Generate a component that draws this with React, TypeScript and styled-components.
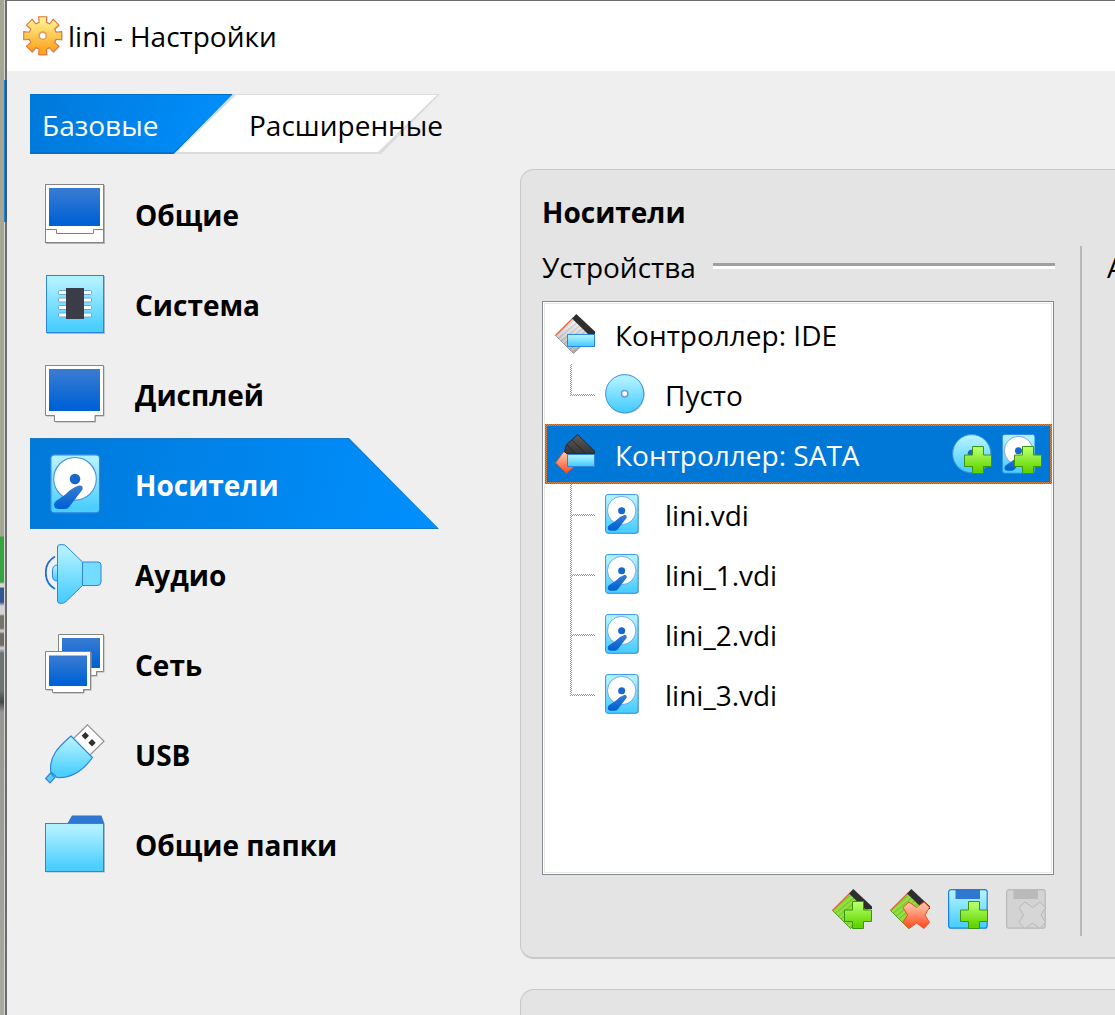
import React, { useState } from "react";
import styled, { createGlobalStyle, css } from "styled-components";

const GlobalStyle = createGlobalStyle`
  *, *::before, *::after { box-sizing: border-box; }
  body {
    margin: 0;
    overflow: hidden;
    background: #efefef;
    color: #000;
    font-family: "Open Sans", "Noto Sans", sans-serif;
    font-size: 28px;
  }
  button { font: inherit; color: inherit; background: none; border: 0; padding: 0; }
  h1, h2, h3, ul { margin: 0; padding: 0; font-weight: 400; font-size: inherit; }
  ul { list-style: none; }
  svg { display: block; flex: none; }
`;

const checker = (a: string, b: string) =>
  `conic-gradient(${a} 25%, ${b} 0 50%, ${a} 0 75%, ${b} 0) 0 0 / 2px 2px`;

/* ---------- window ---------- */

const Screen = styled.div`
  display: flex;
  height: 100vh;
  overflow: hidden;
`;

const Desktop = styled.div`
  flex: none;
  width: 7px;
  background:
    linear-gradient(90deg, transparent 4px, #d4d4d4 4px 5px, #6c6c6c 5px),
    linear-gradient(#a5a694 0 536px, #35a53d 537px 582px, #d8d8d8 584px 587px, #31588f 588px 602px,
      #d5d5d5 606px 614px, #77736a 616px 628px, #d8d8d8 631px, #6f6c66 634px 645px, #d8d8d8 648px,
      #6d7474 653px 690px, #454848 702px, #959792 712px, #aaa99f);
`;

const Blue = styled.div`
  width: 3px;
  height: 142px;
  margin: 80px 0 0 4px;
  background: linear-gradient(90deg, #1c84d8 1px, #3c5a78 1px);
`;

const Window = styled.main`
  display: flex;
  flex: 1;
  flex-direction: column;
  min-width: 0;
  border-top: 1px solid #6c6c6c;
`;

const TitleBar = styled.header`
  display: flex;
  flex: none;
  align-items: center;
  gap: 5px;
  height: 70px;
  padding-left: 16px;
  background: #fff;
`;

const Body = styled.div`
  display: grid;
  flex: 1;
  grid-template-columns: 409px minmax(0, 1fr);
  grid-template-rows: 60px minmax(0, 1fr);
  gap: 15px 81px;
  min-height: 0;
  padding: 23px 0 0 23px;
`;

/* ---------- tabs ---------- */

const Tabs = styled.div`
  display: flex;
  grid-column: 1 / -1;
`;

const slant = "polygon(0 0, 100% 0, calc(100% - 59px) 100%, 0 100%)";
const slantBoth = "polygon(59px 0, 100% 0, calc(100% - 59px) 100%, 0 100%)";

const Tab = styled.button<{ $first?: boolean }>`
  position: relative;
  z-index: 0;
  flex: none;
  width: ${(p) => (p.$first ? 203 : 266)}px;
  margin-left: ${(p) => (p.$first ? 0 : -59)}px;
  padding-left: ${(p) => (p.$first ? 12 : 75)}px;
  padding-top: 2px;
  text-align: left;
  white-space: nowrap;
  color: ${(p) => (p.$first ? "#fff" : "#000")};

  &::before, &::after {
    content: "";
    position: absolute;
    z-index: -1;
    inset: 0;
    clip-path: ${(p) => (p.$first ? slant : slantBoth)};
    background: ${(p) => (p.$first ? "#0070c8" : "#dcdcdc")};
  }
  &::after {
    inset: ${(p) => (p.$first ? "1px 0 2px" : "1px 3px 2px")};
    background: ${(p) => (p.$first ? "linear-gradient(105deg, #0079d9, #0090ff)" : "#fff")};
  }
`;

/* ---------- navigation ---------- */

const NavItem = styled.button<{ $active: boolean }>`
  position: relative;
  z-index: 0;
  display: flex;
  align-items: center;
  gap: 30px;
  width: 100%;
  height: 90px;
  padding-left: 15px;
  font-weight: 700;
  text-align: left;

  ${(p) =>
    p.$active &&
    css`
      color: #fff;
      &::before, &::after {
        content: "";
        position: absolute;
        z-index: -1;
        inset: -1px 0 0;
        clip-path: polygon(0 0, calc(100% - 90px) 0, 100% 100%, 0 100%);
        background: #1579c8;
      }
      &::after {
        inset: 0 1px 1px 0;
        background: linear-gradient(105deg, #0079d9, #0090ff);
      }
    `}
`;

const Label = styled.span`
  padding-top: 2px;
`;

/* ---------- panels ---------- */

const Pages = styled.div`
  display: flex;
  flex-direction: column;
  gap: 30px;
  min-height: 0;
`;

const Panel = styled.section`
  flex: none;
  padding: 23px 0 21px 21px;
  border: 1px solid #c8c8c8;
  border-width: 1px 0 2px 1px;
  border-radius: 14px 0 0 14px;
  background: #e4e4e4;
`;

const NextPanel = styled(Panel)`
  flex: 1 0 26px;
  padding: 0;
  border-bottom: 0;
  border-radius: 14px 0 0 0;
`;

const PanelTitle = styled.h2`
  height: 40px;
  margin-bottom: 13px;
  font-weight: 700;
  line-height: 38px;
`;

const Columns = styled.div`
  display: grid;
  grid-template-columns: minmax(0, 1fr) 2px 33px;
`;

const Devices = styled.div`
  display: flex;
  flex-direction: column;
  padding: 0 26px 7px 0;
`;

const Divider = styled.div`
  background: #b8b8b8;
`;

const Legend = styled.h3`
  display: flex;
  align-items: center;
  gap: 17px;
  height: 42px;
  margin: 0 -1px 13px 0;
  white-space: nowrap;

  &::after {
    content: "";
    flex: 1;
    height: 6px;
    margin-bottom: 2px;
    background: linear-gradient(#a0a0a0 50%, #fff 50%);
  }
`;

const Attributes = styled.h3`
  overflow: hidden;
  height: 42px;
  padding-left: 25px;
  line-height: 42px;
`;

/* ---------- storage tree ---------- */

const Tree = styled.ul`
  min-height: 574px;
  padding: 2px 1px 2px 2px;
  border: 1px solid #828790;
  background: #fff;
  box-shadow: inset 0 0 0 1px #fff, inset 0 0 0 2px #e6e8e3;
`;

const Row = styled.li<{ $selected?: boolean }>`
  display: flex;
  align-items: center;
  gap: 20px;
  height: 60px;
  padding: 0 8px;
  border: 2px solid transparent;
  cursor: default;

  ${(p) =>
    p.$selected &&
    css`
      color: #fff;
      background:
        linear-gradient(#0078d7, #0078d7) padding-box,
        ${checker("#d98b4e", "#2a7cc4")} border-box;
    `}
`;

const ChildRow = styled(Row)`
  gap: 10px;
  padding-left: 25px;
  border-width: 0;
`;

const Branch = styled.span<{ $last: boolean }>`
  display: grid;
  flex: none;
  grid-template: 30px 2px 28px / 2px 1fr;
  width: 25px;

  &::before, &::after {
    content: "";
    grid-area: 1 / 1 / ${(p) => (p.$last ? 3 : 4)} / 2;
    background: ${checker("#969696", "#fff")};
  }
  &::after { grid-area: 2 / 2; }
`;

const ChildName = styled(Label)`
  padding-left: 10px;
`;

const RowActions = styled.span`
  display: flex;
  gap: 10px;
  margin-left: auto;
`;

const ToolBar = styled.div`
  display: flex;
  justify-content: flex-end;
  gap: 18px;
  margin-top: 14px;
  padding-right: 8px;
`;

const IconButton = styled.button`
  display: block;
  width: 40px;
  height: 40px;
`;

/* ---------- icons ---------- */

const Gradients = styled.svg`
  position: absolute;
  width: 0;
  height: 0;
`;

const gradients: Array<[string, string, string]> = [
  ["aqua", "#b0f1ff", "#4ccfff"],
  ["royal", "#3579d2", "#0062d5"],
  ["green", "#b2ff66", "#62d400"],
  ["red", "#ffc3a5", "#ff5329"],
  ["gold", "#fff08e", "#ffa41c"],
  ["dark", "#585858", "#383838"],
  ["gray", "#f4f4f4", "#bcbcbc"],
];

function GradientDefs() {
  return (
    <Gradients aria-hidden="true">
      <defs>
        {gradients.map(([id, from, to]) => (
          <linearGradient key={id} id={id} x1="0" y1="0" x2="0" y2="1">
            <stop offset="0.1" stopColor={from} />
            <stop offset="0.9" stopColor={to} />
          </linearGradient>
        ))}
        <pattern id="pins" width="4" height="4" patternUnits="userSpaceOnUse" patternTransform="rotate(-40)">
          <rect width="4" height="1.5" fill="#000" opacity="0.13" />
        </pattern>
      </defs>
    </Gradients>
  );
}

type ArtProps = { size?: number; box?: string; children: React.ReactNode };

function Art({ size = 40, box, children }: ArtProps) {
  return (
    <svg width={size} height={size} viewBox={box ?? `0 0 ${size} ${size}`} aria-hidden="true">
      {children}
    </svg>
  );
}

function GearIcon() {
  const points: string[] = [];
  const tooth: Array<[number, number]> = [
    [13.8, -15], [15.5, -14], [19.4, -12], [19.4, 12], [15.5, 14], [13.8, 15],
  ];
  for (let i = 0; i < 8; i++) {
    for (const [r, a] of tooth) {
      const t = ((i * 45 + a) * Math.PI) / 180;
      points.push(`${(19.7 + r * Math.cos(t)).toFixed(2)},${(19.7 + r * Math.sin(t)).toFixed(2)}`);
    }
  }
  return (
    <Art>
      <polygon points={points.join(" ")} fill="#888" opacity="0.4" transform="translate(.8 .8)" />
      <polygon points={points.join(" ")} fill="url(#gold)" stroke="#e0733a" strokeWidth="1.1" />
      <circle cx="19.7" cy="19.7" r="3.6" fill="#fff" stroke="#dd9c62" strokeWidth="1.6" />
    </Art>
  );
}

function GeneralIcon() {
  return (
    <Art size={60}>
      <rect x="1.5" y="1.5" width="58" height="58" fill="none" stroke="#b4b4b4" />
      <rect x=".5" y=".5" width="58" height="58" fill="#fff" stroke="#858585" />
      <rect x="4" y="4" width="51" height="38" fill="url(#royal)" />
      <path d="M0 45.5H11.5V49.5H48.5V45.5H59" fill="none" stroke="#808080" />
    </Art>
  );
}

function SystemIcon() {
  return (
    <Art size={60}>
      <rect x="2" y="2" width="58" height="58" fill="#a9b7c6" />
      <rect x="1.5" y="1.5" width="57" height="57" fill="url(#aqua)" stroke="#2f84dc" />
      {[16.5, 24, 31.5, 39].map((y) => (
        <rect key={y} x="13.5" y={y} width="33" height="4" rx="1" fill="#fff" stroke="#6ba5d8" />
      ))}
      <rect x="21" y="14" width="18" height="31" fill="#3a3d47" />
    </Art>
  );
}

function DisplayIcon() {
  const frame = "M.5 1.5H58.5V51.5H50V57.5H9.5V51.5H.5Z";
  return (
    <Art size={60}>
      <path d={frame} transform="translate(1 1)" fill="#b4b4b4" />
      <path d={frame} fill="#fff" stroke="#858585" />
      <rect x="4" y="5" width="51" height="42" fill="url(#royal)" />
    </Art>
  );
}

function DriveShape() {
  return (
    <>
      <rect x="6.6" y="1.6" width="49" height="58" rx="3.5" fill="#3c6690" opacity="0.5" />
      <rect x="5.8" y=".8" width="48.8" height="58" rx="3.5" fill="url(#aqua)" stroke="#2a86e0" strokeWidth="1.3" />
      <circle cx="30" cy="24.8" r="21.3" fill="#fff" stroke="#4a90d8" strokeWidth="1.1" />
      <circle cx="30" cy="25" r="5.3" fill="#1768ce" />
      <path d="M34 31.5Q26 34 21 40L11 47Q9 48.5 9 51L10 54 13 55H20Q23 55 24.5 52.5L37.5 35.5Q38.5 31 34 31.5Z" fill="url(#royal)" />
    </>
  );
}

function StorageIcon() {
  return <Art size={60}><DriveShape /></Art>;
}

function DriveIcon() {
  return <Art box="5 0 60 60"><DriveShape /></Art>;
}

function AudioIcon() {
  return (
    <Art size={60}>
      <path d="M12.5 21Q7.5 21 7.5 27V32Q7.5 37 12.5 37Z" fill="url(#aqua)" stroke="#2f84dc" />
      <path d="M10 12.5C-2.3 19.5-2.3 38 10 45" fill="none" stroke="#1c70d0" strokeWidth="1.8" />
      <path d="M37.5 18H53Q56 18 56 21V38Q56 41.5 52 41.5H37.5Z" fill="#74dcff" stroke="#2f84dc" />
      <path d="M12.5 3Q12.5 .7 15 .7H18Q20 .7 21 2L37.5 18V41.5L21 57.5Q19 59.3 17 59.3H15Q12.5 59.3 12.5 57Z" fill="url(#aqua)" stroke="#2f84dc" />
    </Art>
  );
}

function NetworkIcon() {
  const back = "M13.5 .5H58.5V37.5H51.5V41.5H20V37.5H13.5Z";
  const front = "M.5 17.5H45.5V55.5H38.5V58.5H7.5V55.5H.5Z";
  return (
    <Art size={60}>
      <path d={back} transform="translate(1 1)" fill="#b0b0b0" />
      <path d={back} fill="#fff" stroke="#858585" />
      <rect x="17" y="4" width="38" height="30" fill="url(#royal)" />
      <path d={front} transform="translate(1 1)" fill="#a8a8a8" />
      <path d={front} fill="#fff" stroke="#858585" />
      <rect x="4" y="21.5" width="38" height="30.5" fill="url(#royal)" />
    </Art>
  );
}

function UsbIcon() {
  return (
    <Art size={60}>
      <path d="M42.5 .8L59 17.3 44 32 27.5 15.5Z" fill="#fff" stroke="#909090" strokeWidth="1.2" />
      <path d="M40.3 8L44 11.7 40.3 15.4 36.6 11.7ZM47 15L50.7 18.7 47 22.4 43.3 18.7Z" fill="#303030" />
      <path d="M26 12L47.5 33.5C40 44 29 54.5 12 53.5L5.8 48C3.5 31 16 21 26 12Z" fill="url(#aqua)" stroke="#2f84dc" strokeWidth="1.2" />
      <path d="M5.7 49L10 53.5 5 59 .6 54.5Z" fill="#5ccbf8" stroke="#2f84dc" strokeWidth="1.2" />
    </Art>
  );
}

function FolderIcon() {
  return (
    <Art size={60}>
      <path d="M22 10L27 1.5H56.5L59.5 10Z" fill="#2f77d0" />
      <rect x="1.5" y="10" width="58.5" height="48.5" fill="#a9b7c6" />
      <rect x=".5" y="9.5" width="58" height="48" fill="url(#aqua)" stroke="#2f84dc" />
    </Art>
  );
}

function PlusMark() {
  return (
    <path d="M20.5 12.5H31.5V21H39.5V32.5H31.5V39.5H20.5V32.5H12.5V21H20.5Z" fill="url(#green)" stroke="#3c9410" />
  );
}

const crossPath =
  "M19 13L26.5 18.5 34 13 39.5 18.5 35 26 39.5 33.5 34 39.5 26.5 34 19 39.5 13 33.5 17.5 26 13 18.5Z";

function Disc({ hole = true }: { hole?: boolean }) {
  return (
    <>
      <circle cx="20.3" cy="20.5" r="19.3" fill="#5b7fa6" opacity="0.5" />
      <circle cx="19.7" cy="19.7" r="19.1" fill="url(#aqua)" stroke="#3d8fe0" />
      {hole ? (
        <circle cx="19.7" cy="19.7" r="3.2" fill="#fff" stroke="#6d9cce" strokeWidth="1.5" />
      ) : (
        <circle cx="19.7" cy="19.7" r="4" fill="#1768ce" />
      )}
    </>
  );
}

function Chip({ fill, edge }: { fill: string; edge: string }) {
  return (
    <>
      <path d="M.5 21.5L18 4 37 22 18.5 39.5Z" fill={fill} stroke={edge} strokeWidth=".8" />
      <path d="M.5 21.5L18 4 37 22 18.5 39.5Z" fill="url(#pins)" />
      <path d="M.5 21.5L18 4" stroke="#e8633a" strokeWidth="1.2" />
      <path d="M17 4.5L21.3 0 40 17.5V20H33Z" fill="#2e2e2e" />
    </>
  );
}

function IdeIcon() {
  return (
    <Art>
      <Chip fill="url(#gray)" edge="#909090" />
      <rect x="12.5" y="20.5" width="27" height="12" fill="url(#aqua)" stroke="#2f84dc" />
    </Art>
  );
}

function SataIcon() {
  return (
    <Art>
      <path d="M8.5 18L.5 29 11.5 39.5 21 31 15 20Z" fill="url(#red)" stroke="#d8431c" strokeWidth=".7" />
      <path d="M22.7 .5L39.5 17V20H12L9.5 17.5 11.5 10.5Z" fill="url(#dark)" stroke="#222" strokeWidth=".8" />
      <path d="M12 11L20 19M17 6L31 20" stroke="#262626" strokeWidth=".9" />
      <rect x="12.5" y="20.5" width="27" height="12" fill="url(#aqua)" stroke="#2f84dc" />
    </Art>
  );
}

function AddDiscIcon() {
  return <Art><Disc hole={false} /><PlusMark /></Art>;
}

function AddDriveIcon() {
  return (
    <Art>
      <g transform="translate(-3.5 0) scale(.667)"><DriveShape /></g>
      <PlusMark />
    </Art>
  );
}

function AddControllerIcon() {
  return <Art><Chip fill="#92e33e" edge="#3c9410" /><PlusMark /></Art>;
}

function RemoveControllerIcon() {
  return (
    <Art>
      <Chip fill="#92e33e" edge="#3c9410" />
      <path d={crossPath} fill="url(#red)" stroke="#e8502a" strokeLinejoin="round" />
    </Art>
  );
}

function AddAttachmentIcon() {
  return (
    <Art>
      <rect x=".6" y=".6" width="38.6" height="38.6" rx="2.5" fill="url(#aqua)" stroke="#1e7edc" strokeWidth="1.2" />
      <rect x="7.5" y="0" width="24.5" height="10" fill="#2f77d0" />
      <PlusMark />
    </Art>
  );
}

function RemoveAttachmentIcon() {
  return (
    <Art>
      <rect x=".6" y=".6" width="38.6" height="38.6" rx="2.5" fill="#d3d3d3" stroke="#b8b8b8" strokeWidth="1.2" />
      <rect x="7.5" y="0" width="24.5" height="10" fill="#bababa" />
      <path d={crossPath} fill="#d6d6d6" stroke="#b8b8b8" strokeLinejoin="round" />
    </Art>
  );
}

/* ---------- page ---------- */

const sections: Array<[string, React.ComponentType]> = [
  ["Общие", GeneralIcon],
  ["Система", SystemIcon],
  ["Дисплей", DisplayIcon],
  ["Носители", StorageIcon],
  ["Аудио", AudioIcon],
  ["Сеть", NetworkIcon],
  ["USB", UsbIcon],
  ["Общие папки", FolderIcon],
];

const drives = ["lini.vdi", "lini_1.vdi", "lini_2.vdi", "lini_3.vdi"];

export default function App() {
  const [section, setSection] = useState("Носители");
  return (
    <Screen>
      <GlobalStyle />
      <GradientDefs />
      <Desktop><Blue /></Desktop>
      <Window>
        <TitleBar>
          <GearIcon />
          <h1>lini - Настройки</h1>
        </TitleBar>
        <Body>
          <Tabs>
            <Tab type="button" $first>Базовые</Tab>
            <Tab type="button">Расширенные</Tab>
          </Tabs>
          <nav>
            {sections.map(([name, Icon]) => (
              <NavItem key={name} type="button" $active={name === section} onClick={() => setSection(name)}>
                <Icon />
                <Label>{name}</Label>
              </NavItem>
            ))}
          </nav>
          <Pages>
            <Panel>
              <PanelTitle>Носители</PanelTitle>
              <Columns>
                <Devices>
                  <Legend>Устройства</Legend>
                  <Tree role="tree">
                    <Row role="treeitem">
                      <IdeIcon />
                      <Label>Контроллер: IDE</Label>
                    </Row>
                    <ChildRow role="treeitem">
                      <Branch $last />
                      <Art><Disc /></Art>
                      <ChildName>Пусто</ChildName>
                    </ChildRow>
                    <Row role="treeitem" aria-selected="true" $selected>
                      <SataIcon />
                      <Label>Контроллер: SATA</Label>
                      <RowActions>
                        <IconButton type="button"><AddDiscIcon /></IconButton>
                        <IconButton type="button"><AddDriveIcon /></IconButton>
                      </RowActions>
                    </Row>
                    {drives.map((name, i) => (
                      <ChildRow role="treeitem" key={name}>
                        <Branch $last={i === drives.length - 1} />
                        <DriveIcon />
                        <ChildName>{name}</ChildName>
                      </ChildRow>
                    ))}
                  </Tree>
                  <ToolBar>
                    <IconButton type="button"><AddControllerIcon /></IconButton>
                    <IconButton type="button"><RemoveControllerIcon /></IconButton>
                    <IconButton type="button"><AddAttachmentIcon /></IconButton>
                    <IconButton type="button" disabled><RemoveAttachmentIcon /></IconButton>
                  </ToolBar>
                </Devices>
                <Divider />
                <Attributes>А</Attributes>
              </Columns>
            </Panel>
            <NextPanel />
          </Pages>
        </Body>
      </Window>
    </Screen>
  );
}
